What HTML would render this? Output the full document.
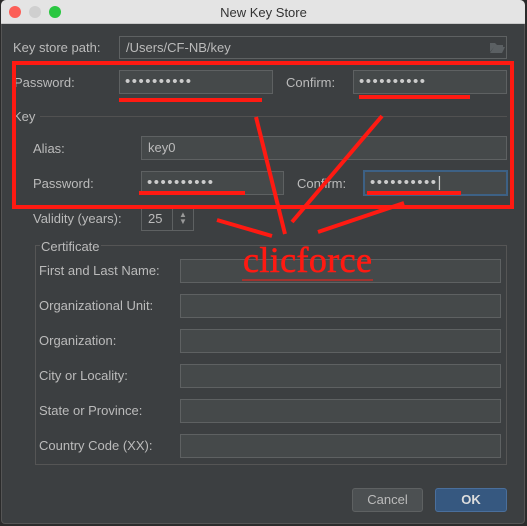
<!DOCTYPE html>
<html><head><meta charset="utf-8"><style>
*{margin:0;padding:0;box-sizing:border-box}
body{width:527px;height:526px;background:#2b2b2b;position:relative;overflow:hidden;font-family:"Liberation Sans",sans-serif;font-size:13px;color:#bbbbbb}
.a{position:absolute}
.f{position:absolute;background:#45494a;border:1px solid #5e6162;color:#bbb;font-size:13px;padding-left:6px;line-height:21px}
.l{position:absolute;font-size:13px;color:#bbb}
.d{letter-spacing:1.5px;font-size:15px;color:#ccc;padding-left:5px}
.r{position:absolute;background:#ff1a12}
</style></head><body>
<div class="a" style="left:1px;top:0;width:524px;height:524px;background:#3c3f41;border-radius:5px 5px 4px 4px;border:1px solid #555"></div>
<div class="a" style="left:1px;top:0;width:524px;height:24px;background:#e4e4e4;border-radius:5px 5px 0 0;border-bottom:1px solid #c8c8c8"></div>
<div class="a" style="left:9px;top:6px;width:12px;height:12px;border-radius:50%;background:#fc5f57"></div>
<div class="a" style="left:29px;top:6px;width:12px;height:12px;border-radius:50%;background:#cfcfcf"></div>
<div class="a" style="left:49px;top:6px;width:12px;height:12px;border-radius:50%;background:#2ac741"></div>
<div class="a" style="left:0;width:527px;top:5px;text-align:center;color:#333;font-size:13px">New Key Store</div>

<div class="l" style="left:13px;top:40px">Key store path:</div>
<div class="f" style="left:119px;top:36px;width:388px;height:23px;background:#3c3f41">/Users/CF-NB/key</div>
<svg class="a" style="left:489px;top:41px" width="16" height="12"><path d="M1 2h5l2 2h6v2H5L1 11z M5 6h11l-3 6H1z" fill="#5b6063"/></svg>

<div class="l" style="left:14px;top:75px">Password:</div>
<div class="f d" style="left:119px;top:70px;width:154px;height:24px">••••••••••</div>
<div class="l" style="left:286px;top:75px">Confirm:</div>
<div class="f d" style="left:353px;top:70px;width:154px;height:24px">••••••••••</div>

<div class="l" style="left:13px;top:109px">Key</div>
<div class="a" style="left:40px;top:116px;width:467px;height:1px;background:#515151"></div>

<div class="l" style="left:33px;top:141px">Alias:</div>
<div class="f" style="left:141px;top:136px;width:366px;height:24px">key0</div>
<div class="l" style="left:33px;top:176px">Password:</div>
<div class="f d" style="left:141px;top:171px;width:143px;height:24px">••••••••••</div>
<div class="l" style="left:297px;top:176px">Confirm:</div>
<div class="f d" style="left:363px;top:170px;width:145px;height:26px;border:2px solid #3d6185">••••••••••|</div>

<div class="l" style="left:33px;top:211px">Validity (years):</div>
<div class="f" style="left:141px;top:207px;width:53px;height:24px;background:#3c3f41">25</div>
<div class="a" style="left:172px;top:208px;width:1px;height:22px;background:#5e6162"></div>
<div class="a" style="left:179px;top:211px;font-size:8px;line-height:7px;color:#999">▲<br>▼</div>

<div class="a" style="left:35px;top:245px;width:472px;height:220px;border:1px solid #555"></div>
<div class="l" style="left:40px;top:239px;background:#3c3f41;padding:0 1px">Certificate</div>
<div class="l" style="left:39px;top:263px">First and Last Name:</div>
<div class="f" style="left:180px;top:259px;width:321px;height:24px"></div>
<div class="l" style="left:39px;top:298px">Organizational Unit:</div>
<div class="f" style="left:180px;top:294px;width:321px;height:24px"></div>
<div class="l" style="left:39px;top:333px">Organization:</div>
<div class="f" style="left:180px;top:329px;width:321px;height:24px"></div>
<div class="l" style="left:39px;top:368px">City or Locality:</div>
<div class="f" style="left:180px;top:364px;width:321px;height:24px"></div>
<div class="l" style="left:39px;top:403px">State or Province:</div>
<div class="f" style="left:180px;top:399px;width:321px;height:24px"></div>
<div class="l" style="left:39px;top:438px">Country Code (XX):</div>
<div class="f" style="left:180px;top:434px;width:321px;height:24px"></div>

<div class="a" style="left:352px;top:488px;width:71px;height:24px;background:#4c5052;border:1px solid #5e6162;border-radius:3px;text-align:center;line-height:22px;color:#bbb">Cancel</div>
<div class="a" style="left:435px;top:488px;width:72px;height:24px;background:#365880;border:1px solid #4a6f9c;border-radius:3px;text-align:center;line-height:22px;color:#ddd;font-weight:bold">OK</div>

<div class="a" style="left:12px;top:61px;width:502px;height:148px;border:4px solid #ff1a12"></div>
<div class="r" style="left:119px;top:98px;width:143px;height:4px"></div>
<div class="r" style="left:359px;top:95px;width:111px;height:4px"></div>
<div class="r" style="left:139px;top:191px;width:106px;height:4px"></div>
<div class="r" style="left:367px;top:191px;width:94px;height:4px"></div>
<svg class="a" style="left:0;top:0" width="527" height="526">
<g stroke="#ff1a12" stroke-width="4" fill="none">
<line x1="256" y1="117" x2="285" y2="234"/>
<line x1="382" y1="116" x2="292" y2="222"/>
<line x1="217" y1="220" x2="272" y2="236"/>
<line x1="404" y1="203" x2="318" y2="232"/>
</g>
<line x1="242" y1="280" x2="373" y2="280" stroke="#ff1a12" stroke-width="1"/>
<text x="243" y="272" font-family="Liberation Serif,serif" font-size="36" textLength="129" fill="#ff1a12" stroke="#ff1a12" stroke-width="0.6">clicforce</text>
</svg>
</body></html>
